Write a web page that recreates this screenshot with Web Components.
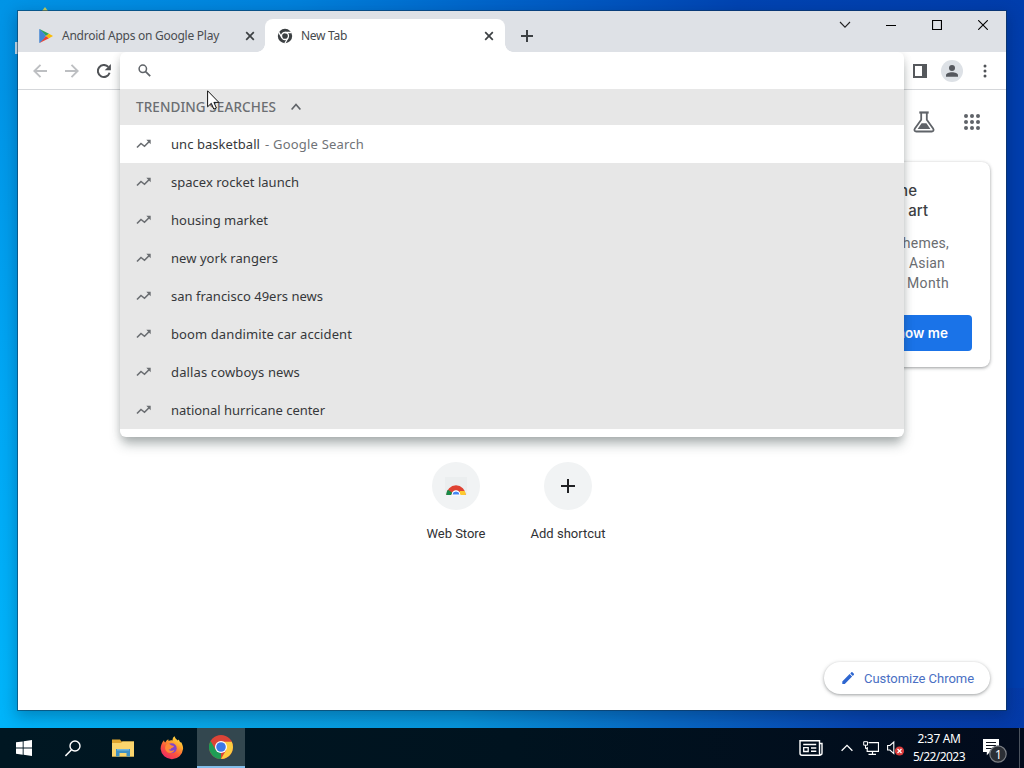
<!DOCTYPE html>
<html lang="en">
<head>
<meta charset="utf-8">
<title>Desktop</title>
<style>
  html, body{
    margin:0;
    width:1024px;
    height:768px;
    overflow:hidden;
    font-family:"Noto Sans", "Open Sans", sans-serif;
  }
</style>
</head>
<body>

<desk-top>
  <browser-window>
    <browser-tab slot="tabs" icon="play" w="157">Android Apps on Google Play</browser-tab>
    <browser-tab slot="tabs" icon="chromeDark" w="46" active>New Tab</browser-tab>

    <new-tab-page>
      <short-cut icon="webstore" w="59">Web Store</short-cut>
      <short-cut icon="plusBig" w="75">Add shortcut</short-cut>
    </new-tab-page>

    <search-popup slot="popup">
      <search-item w="89" selected>unc basketball</search-item>
      <search-item w="128">spacex rocket launch</search-item>
      <search-item w="97">housing market</search-item>
      <search-item w="107">new york rangers</search-item>
      <search-item w="152">san francisco 49ers news</search-item>
      <search-item w="181">boom dandimite car accident</search-item>
      <search-item w="129">dallas cowboys news</search-item>
      <search-item w="154">national hurricane center</search-item>
    </search-popup>
  </browser-window>
  <task-bar slot="bar"></task-bar>
  <mouse-pointer slot="pointer"></mouse-pointer>
</desk-top>

<script>
// name: [width, height, markup]
const ICONS = {
  play: [16, 16, `<path d="M1.5 1v14L8 8z" fill="#4285d4"/><path d="M1.5 1 11 5.7 8 8z" fill="#2da55d"/><path d="M1.5 15 11 10.3 8 8z" fill="#ea4335"/><path d="M11 5.7 15 8l-4 2.3L8 8z" fill="#fbbc04"/><path d="M1.500 1v14L6.500 10V6z" fill="#4285d4"/>`],
  chromeDark: [16, 16, `<circle cx="8" cy="8" r="7.200" fill="#3c4043"/><circle cx="8" cy="8" r="3.500" fill="none" stroke="#fff" stroke-width="1.300"/><path d="M8 4.500h6.500M5 9.800 1.700 4.200M11 9.800 7.800 15.500" stroke="#fff" stroke-width="1.300"/>`],
  close: [10, 10, `<path d="m1.200 1.200 7.600 7.600m0-7.600L1.200 8.800" stroke="#3c4043" stroke-width="1.700"/>`],
  plus: [12, 12, `<path d="M6 0v12M0 6h12" stroke="#3c4043" stroke-width="2"/>`],
  plusBig: [14, 14, `<path d="M7 0v14M0 7h14" stroke="#202124" stroke-width="2"/>`],
  winMenu: [12, 12, `<path d="m1 3 5 5.200L11 3" fill="none" stroke="#222" stroke-width="1.100"/>`],
  winMin: [10, 10, `<path d="M0 5.500h10" stroke="#000"/>`],
  winMax: [10, 10, `<path d="M.5.5h9v9h-9z" fill="none" stroke="#000" stroke-width="1.200"/>`],
  winClose: [10, 10, `<path d="m.2.2 9.600 9.600m0-9.600L.2 9.800" stroke="#000" stroke-width="1.100"/>`],
  back: [14, 14, `<path d="M14 7H1.500M7.500.800 1.300 7l6.200 6.200" fill="none" stroke="#bdbfc2" stroke-width="1.900"/>`],
  forward: [14, 14, `<path d="M0 7h12.500M6.500.800 12.700 7l-6.200 6.200" fill="none" stroke="#bdbfc2" stroke-width="1.900"/>`],
  reload: [14, 14, `<path d="M12.600 8.800A6 6 0 1 1 11.300 2.900" fill="none" stroke="#505357" stroke-width="2"/><path d="M13.900 0v6.300H7.700z" fill="#505357"/>`],
  search: [13, 13, `<circle cx="4.800" cy="4.800" r="3.700" fill="none" stroke="#5f6368" stroke-width="1.500"/><path d="m7.600 7.600 4.600 4.600" stroke="#5f6368" stroke-width="1.700"/>`],
  panel: [14, 14, `<path d="M0 0h14v14H0z" fill="#55585c"/><path d="M2 2h7v10H2z" fill="#fff"/>`],
  person: [22, 22, `<circle cx="11" cy="11" r="11" fill="#dde1e6"/><circle cx="11" cy="8" r="3" fill="#55585e"/><path d="M5 16.800v-1.500c0-4 12-4 12 0v1.500z" fill="#55585e"/>`],
  dots: [4, 14, `<circle cx="2" cy="2" r="1.500" fill="#505357"/><circle cx="2" cy="7" r="1.500" fill="#505357"/><circle cx="2" cy="12" r="1.500" fill="#505357"/>`],
  caret: [10, 10, `<path d="m.600 7.500 4.400-5 4.400 5" fill="none" stroke="#5f6368" stroke-width="1.700"/>`],
  trend: [16, 10, `<path d="m1 8.500 4-4 3.500 2.800 5-5" fill="none" stroke="#6a6d71" stroke-width="1.600"/><path d="M10.300.800h4.400v4.400z" fill="#6a6d71"/>`],
  flask: [22, 22, `<path d="M6.300 1.500h9.400" stroke="#5f6368" stroke-width="2.200"/><path d="M8.200 2v6.700L1.900 17.500c-1 1.500-.3 3 1.400 3h15.400c1.700 0 2.400-1.500 1.400-3L13.800 8.700V2" fill="none" stroke="#5f6368" stroke-width="1.800"/><path d="m4.600 18 4-5.700h4.800l4 5.700z" fill="#5f6368"/>`],
  apps: [16, 16, [2, 8, 14].map(y => [2, 8, 14].map(x => `<circle cx="${x}" cy="${y}" r="2" fill="#5f6368"/>`).join('')).join('')],
  webstore: [24, 24, `<path d="M1 3h22v18H1z" fill="#ebeeef"/><path d="M2.300 21a9.700 9.700 0 0 1 19.400 0h-5a4.700 4.700 0 0 0-9.400 0z" fill="#df4232"/><path d="M2.300 21c0-2.200.600-3.800 1.600-5.200L8 18.500 7.300 21z" fill="#188a47"/><path d="M16 17h4.800c.7 1.300.9 2.700.9 4H16z" fill="#fdc92f"/><path d="M8 21a4 4 0 0 1 8 0z" fill="#4285f4" stroke="#fff"/>`],
  pencil: [12, 12, `<path d="M.300 9.400 7.600 2.100l2.500 2.500-7.300 7.300H.300zM8.300 1.400 9.400.300c.3-.3.7-.3 1 0l1.500 1.500c.3.300.3.700 0 1l-1.100 1.100z" fill="#2e66d0"/>`],
  start: [16, 16, `<path d="M0 2.300 6.700 1.400v6.200H0zM7.600 1.200 16 0v7.600H7.600zM0 8.500h6.700v6.200L0 13.800zM7.600 8.500H16V16l-8.400-1.200z" fill="#fff"/>`],
  magnifier: [16, 17, `<circle cx="10" cy="6" r="5" fill="none" stroke="#fff" stroke-width="1.400"/><path d="M6.500 9.700.400 16" stroke="#fff" stroke-width="1.500"/>`],
  folder: [22, 18, `<path d="M0 .500h8l1.500 2H22V17.500H0z" fill="#e0a52f"/><path d="M0 4h9l1.500-1.500H22v15H0z" fill="#fbd56d"/><path d="M4 17.500V10h14v7.500h-3.500V14h-7v3.500z" fill="#3f91c4"/><path d="M5 10h12v1.500H5z" fill="#74b6db"/>`],
  firefox: [24, 24, `<defs><linearGradient id="f" x1=".9" y1="0" x2=".25" y2="1"><stop offset="0" stop-color="#fff14d"/><stop offset=".35" stop-color="#ffa62d"/><stop offset=".65" stop-color="#fb553c"/><stop offset="1" stop-color="#ee2765"/></linearGradient></defs><path d="M4 4.200c.2 1.200.7 1.900 1.200 2.200C6 5 7 3.900 8.300 3.200L8.600 5c1.300-.7 2.600-.9 4-.5-.2-1.800.5-3.500 2-4.300.5 2 1.700 3 3.200 4.300l.8-.9c.7 1 1.300 2 1.500 2.900l.9-.4c1.300 2 2.100 4.100 2.100 6.700A11.300 11.300 0 0 1 .600 13c0-3.700 1.300-6.400 3.400-8.800z" fill="url(#f)"/><circle cx="11.700" cy="12.300" r="5" fill="#8144c9"/><path d="M6.500 8.500c1.600-1 3.500-.4 4.700.7l2.800.8c-.3 1.300-1.400 1.700-2.800 2.200-.3 1.300-1.500 1.600-2.600 1.300 1.200 2 4.300 1.500 5.900.2-1.300 4-6.500 4.500-8.700.8-1.100-1.900-.9-4.400.7-6z" fill="#ff8a36"/>`],
  chrome: [24, 24, `<circle cx="12" cy="12" r="12" fill="#db4437"/><path d="M1.600 6 6.800 15 12 18v6A12 12 0 0 1 1.600 6z" fill="#1f9d55"/><path d="M12 24a12 12 0 0 0 10.800-17.200H12l5.200 8.200z" fill="#fdcd40"/><circle cx="12" cy="12" r="6" fill="#fff"/><circle cx="12" cy="12" r="4.800" fill="#3b78e7"/>`],
  news: [24, 16, `<path d="M20.500 3.500H23v9.800c0 2-2.500 2-2.500 0V.8H1v12.500C1 14.600 1.800 15.200 3 15.200h18.500" fill="none" stroke="#fff" stroke-width="1.400"/><path d="M4.200 4.500h13M12 8h5.300M12 11.300h5.300" stroke="#fff" stroke-width="1.500"/><path d="M4.700 7.700h4.500v3.800H4.700z" fill="none" stroke="#fff" stroke-width="1.300"/>`],
  trayUp: [12, 8, `<path d="m.600 6.800 5.400-5.400 5.400 5.400" fill="none" stroke="#fff" stroke-width="1.300"/>`],
  network: [16, 14, `<path d="M5.500 1.700h10v8.600H4.200V6M9.500 10.300v3M5.500 13.300h7.500" fill="none" stroke="#fff" stroke-width="1.200"/><path d="M.700.700h3.800v3.500H.700zM2.500 4v3.500h2" fill="none" stroke="#fff"/>`],
  sound: [18, 16, `<path d="M.600 5.500h2.300L6.800 2v11.500L2.900 10H.600z" fill="none" stroke="#fff" stroke-width="1.100"/><circle cx="12.500" cy="11" r="4.600" fill="#d93a3a"/><path d="m10.500 9 4 4m0-4-4 4" stroke="#fff" stroke-width="1.200"/>`],
  notes: [28, 27, `<path d="M1 3h16v13h-9l-3.200 3.200V16H1z" fill="#fff"/><path d="M4 6.500h10M4 9.500h10M4 12.500h7" stroke="#10151f"/><circle cx="16" cy="18" r="8.200" fill="#2b2f35" stroke="#7b7f85" stroke-width="1.200"/>`]
};

class BaseElement extends HTMLElement{

  constructor(){
    super();
    this.attachShadow({mode:"open"});
  }

  getTemplate(){
    const template = document.createElement('template');
    template.innerHTML = `${this.getStyles()}${this.getMarkup()}`;
    return template
  }

  getStyles(){
    return ''
  }

  getMarkup(){
    return '<slot></slot>'
  }

  connectedCallback(){
    this.shadowRoot.replaceChildren(this.getTemplate().content.cloneNode(true));
  }

}

class UiIcon extends BaseElement{

  getStyles(){
    return `<style>:host{ display:block; flex:none; } svg{ display:block; }</style>`
  }

  getMarkup(){
    const [w, h, body] = ICONS[this.getAttribute('name')];
    return `<svg width="${w}" height="${h}" viewBox="0 0 ${w} ${h}">${body}</svg>`
  }

}

// a single line of text, tracked so that it is exactly "w" pixels wide
class FitText extends BaseElement{

  getStyles(){
    return `
      <style>
        :host{ display:block; flex:none; white-space:nowrap; }
        span{ display:inline-block; }
      </style>
    `
  }

  getMarkup(){
    return '<span><slot></slot></span>'
  }

  connectedCallback(){
    super.connectedCallback();
    const w = Number(this.getAttribute('w'));
    const span = this.shadowRoot.querySelector('span');
    const natural = span.getBoundingClientRect().width;
    if(w && natural){
      span.style.letterSpacing = `${(w - natural) / this.textContent.length}px`;
      this.style.width = `${w}px`;
    }
  }

}

class DeskTop extends BaseElement{

  getStyles(){
    return `
      <style>
        :host{
          display:flex;
          flex-direction:column;
          box-sizing:border-box;
          position:relative;
          width:1024px;
          height:768px;
          padding-top:11px;
          overflow:hidden;
          background:
            linear-gradient(90deg, #0094e6 0, #0082dc 28%, #0061c8 50%, #0044b2 72%, #003dac 100%) 0 0 / 100% 90px no-repeat,
            linear-gradient(90deg, #00b4fa 0, #08a6e6 20%, #0794da 45%, #0869c4 65%, #0743b0 85%, #043aa8 100%) 0 100% / 100% 80px no-repeat,
            linear-gradient(90deg, transparent 50%, #003eae 50%),
            linear-gradient(#0094e6 80px, #00a8f5 400px, #00b4fa 690px);
        }
        .mark{ position:absolute; left:15px; top:42px; width:3px; height:12px; background:#cde4f2; }
        .mark.top{ left:42px; top:7px; width:6px; height:4px; background:#c4cf5c; clip-path:polygon(50% 0, 100% 100%, 0 100%); }
      </style>
    `
  }

  getMarkup(){
    return `
      <i class="mark"></i><i class="mark top"></i>
      <slot></slot>
      <slot name="bar"></slot>
      <slot name="pointer"></slot>
    `
  }

}

class BrowserWindow extends BaseElement{

  getStyles(){
    return `
      <style>
        :host{
          display:flex;
          flex-direction:column;
          position:relative;
          width:988px;
          height:699px;
          margin-left:18px;
          background:#fff;
          box-shadow:0 0 0 1px rgba(15,50,80,.55), 0 5px 14px 2px rgba(0,20,50,.28);
        }
        .strip{ display:flex; height:41px; background:#dee1e6; }
        .tabs{ display:flex; align-items:flex-end; padding-left:7px; }
        .new{ margin:19px 0 0 16px; }
        .controls{ display:flex; margin-left:auto; }
        .controls span{ width:46px; height:28px; display:grid; place-items:center; }
        .bar{ display:flex; align-items:center; height:37px; border-bottom:1px solid #d5d7da; }
        .nav{ display:flex; gap:18px; padding-left:15px; }
        .actions{ display:flex; align-items:center; margin-left:auto; padding-right:19px; }
        .actions ui-icon + ui-icon{ margin-left:14px; }
        .actions ui-icon:last-child{ margin-left:20px; }
      </style>
    `
  }

  getMarkup(){
    return `
      <div class="strip">
        <div class="tabs"><slot name="tabs"></slot></div>
        <ui-icon class="new" name="plus"></ui-icon>
        <div class="controls">
          <span><ui-icon name="winMenu"></ui-icon></span>
          <span><ui-icon name="winMin"></ui-icon></span>
          <span><ui-icon name="winMax"></ui-icon></span>
          <span><ui-icon name="winClose"></ui-icon></span>
        </div>
      </div>
      <div class="bar">
        <div class="nav">
          <ui-icon name="back"></ui-icon>
          <ui-icon name="forward"></ui-icon>
          <ui-icon name="reload"></ui-icon>
        </div>
        <div class="actions">
          <ui-icon name="panel"></ui-icon>
          <ui-icon name="person"></ui-icon>
          <ui-icon name="dots"></ui-icon>
        </div>
      </div>
      <slot></slot>
      <slot name="popup"></slot>
    `
  }

}

class BrowserTab extends BaseElement{

  getStyles(){
    return `
      <style>
        :host{
          display:flex;
          align-items:center;
          box-sizing:border-box;
          width:240px;
          height:33px;
          padding:0 10px 0 13px;
          border-radius:8px 8px 0 0;
          font-size:12px;
          line-height:18px;
          color:#4a4d51;
        }
        :host([active]){
          position:relative;
          padding:0 11px 0 12px;
          background:#fff;
          color:#45494d;
        }
        /* rounded feet of the active tab */
        :host([active])::before, :host([active])::after{
          content:"";
          position:absolute;
          bottom:0;
          width:8px;
          height:8px;
        }
        :host([active])::before{ left:-8px; background:radial-gradient(circle at 0 0, transparent 7.5px, #fff 8px); }
        :host([active])::after{ right:-8px; background:radial-gradient(circle at 100% 0, transparent 7.5px, #fff 8px); }
        fit-text{ margin-left:8px; }
        .x{ margin-left:auto; }
      </style>
    `
  }

  getMarkup(){
    return `
      <ui-icon name="${this.getAttribute('icon')}"></ui-icon>
      <fit-text w="${this.getAttribute('w')}">${this.textContent}</fit-text>
      <ui-icon class="x" name="close"></ui-icon>
    `
  }

}

class SearchPopup extends BaseElement{

  getStyles(){
    return `
      <style>
        :host{
          display:block;
          position:absolute;
          left:102px;
          top:41px;
          width:784px;
          height:385px;
          background:#fff;
          border-radius:6px;
          box-shadow:0 9px 12px -2px rgba(40,60,60,.34), 0 2px 8px rgba(0,0,0,.13);
          clip-path:inset(0 -20px -30px -20px);
        }
        .input{ display:flex; align-items:center; height:37px; padding-left:18px; }
        .head{
          display:flex;
          align-items:center;
          box-sizing:border-box;
          height:36px;
          padding-left:16px;
          gap:15px;
          background:#e7e7e7;
          color:#6b6e72;
          font-size:13.5px;
          font-weight:500;
          line-height:20px;
        }
      </style>
    `
  }

  getMarkup(){
    return `
      <div class="input"><ui-icon name="search"></ui-icon></div>
      <div class="head">
        <fit-text w="140">TRENDING SEARCHES</fit-text>
        <ui-icon name="caret"></ui-icon>
      </div>
      <slot></slot>
    `
  }

}

class SearchItem extends BaseElement{

  getStyles(){
    return `
      <style>
        :host{
          display:flex;
          align-items:center;
          height:38px;
          padding-left:16px;
          background:#e7e7e7;
          color:#36383b;
          font-size:13px;
          line-height:21px;
        }
        :host([selected]){ background:#fff; }
        fit-text{ margin-left:19px; }
        .from{ margin-left:5px; color:#707377; }
      </style>
    `
  }

  getMarkup(){
    const from = this.hasAttribute('selected') ? '<fit-text class="from" w="99">- Google Search</fit-text>' : '';
    return `
      <ui-icon name="trend"></ui-icon>
      <fit-text w="${this.getAttribute('w')}">${this.textContent}</fit-text>
      ${from}
    `
  }

}

class NewTabPage extends BaseElement{

  getStyles(){
    return `
      <style>
        :host{
          display:flex;
          flex-direction:column;
          flex:1;
          min-height:0;
          font-family:Roboto, sans-serif;
        }
        .top{
          display:flex;
          justify-content:flex-end;
          align-items:center;
          gap:29px;
          height:32px;
          padding:16px 26px 0 0;
        }
        .card{
          display:flex;
          flex-direction:column;
          align-items:flex-end;
          align-self:flex-end;
          box-sizing:border-box;
          width:150px;
          height:205px;
          margin:24px 16px 0 0;
          padding-top:19px;
          border-radius:8px;
          box-shadow:0 1px 3px rgba(60,64,67,.4), 0 1px 4px rgba(60,64,67,.16);
          font-size:14px;
          line-height:20px;
          color:#6a6d71;
        }
        .title{ font:500 15px/20px Inter, sans-serif; color:#3c4043; }
        .gap{ margin-top:12px; }
        .show{
          display:flex;
          align-items:center;
          justify-content:flex-end;
          box-sizing:border-box;
          width:90px;
          height:36px;
          margin:22px 18px 0 0;
          padding-right:24px;
          border-radius:4px;
          background:#1a73e8;
          color:#fff;
          font:600 13.5px/20px Inter, sans-serif;
        }
        .shortcuts{ display:flex; justify-content:center; margin-top:95px; }
        .customize{
          display:flex;
          align-items:center;
          align-self:flex-end;
          box-sizing:border-box;
          width:166px;
          height:32px;
          margin:auto 16px 16px 0;
          padding-left:18px;
          gap:10px;
          border-radius:16px;
          box-shadow:0 1px 3px rgba(60,64,67,.4), 0 1px 5px rgba(60,64,67,.14);
          font-size:13px;
          line-height:18px;
          color:#4a70c4;
        }
        .customize fit-text{ padding-top:1px; }
      </style>
    `
  }

  getMarkup(){
    return `
      <div class="top">
        <ui-icon name="flask"></ui-icon>
        <ui-icon name="apps"></ui-icon>
      </div>
      <div class="card">
        <fit-text class="title" style="margin-right:73px">me</fit-text>
        <fit-text class="title" style="margin-right:62px">art</fit-text>
        <fit-text class="gap" w="51" style="margin-right:41px">themes,</fit-text>
        <fit-text w="36" style="margin-right:45px">Asian</fit-text>
        <fit-text w="42" style="margin-right:41px">Month</fit-text>
        <div class="show">Show me</div>
      </div>
      <div class="shortcuts"><slot></slot></div>
      <div class="customize">
        <ui-icon name="pencil"></ui-icon>
        <fit-text w="110">Customize Chrome</fit-text>
      </div>
    `
  }

}

class ShortCut extends BaseElement{

  getStyles(){
    return `
      <style>
        :host{
          display:flex;
          flex-direction:column;
          align-items:center;
          width:112px;
          font-size:13px;
          line-height:20px;
          color:#303134;
        }
        .circle{
          display:grid;
          place-items:center;
          width:48px;
          height:48px;
          margin-bottom:14px;
          border-radius:50%;
          background:#f1f3f4;
        }
      </style>
    `
  }

  getMarkup(){
    return `
      <div class="circle"><ui-icon name="${this.getAttribute('icon')}"></ui-icon></div>
      <fit-text w="${this.getAttribute('w')}">${this.textContent}</fit-text>
    `
  }

}

class TaskBar extends BaseElement{

  getStyles(){
    return `
      <style>
        :host{
          display:flex;
          position:relative;
          height:40px;
          margin-top:18px;
          background:linear-gradient(90deg, #001722, #00131f 50%, #020b1c);
          color:#fff;
        }
        .app{ display:grid; place-items:center; width:48px; height:40px; }
        .app + .app{ margin-left:1px; }
        .app:nth-child(2){ margin-left:0; }
        .app.open{ box-sizing:border-box; background:#33474f; border-bottom:2px solid #82bdea; }
        .tray{ display:flex; align-items:center; margin-left:auto; }
        .clock{
          display:flex;
          flex-direction:column;
          align-items:center;
          width:52px;
          margin-left:8px;
          font-size:12px;
          line-height:18px;
        }
        .notes{ display:grid; margin-left:17px; padding-top:4px; }
        .notes > *{ grid-area:1 / 1; }
        .notes b{ padding:9px 0 0 13px; font:12px/19px "Noto Sans", sans-serif; }
        .peek{ align-self:stretch; width:4px; margin-left:9px; border-left:1px solid #4b535e; }
      </style>
    `
  }

  getMarkup(){
    return `
      <div class="app"><ui-icon name="start"></ui-icon></div>
      <div class="app"><ui-icon name="magnifier"></ui-icon></div>
      <div class="app" style="margin-left:2px"><ui-icon name="folder"></ui-icon></div>
      <div class="app"><ui-icon name="firefox"></ui-icon></div>
      <div class="app open"><ui-icon name="chrome"></ui-icon></div>
      <div class="tray">
        <ui-icon name="news"></ui-icon>
        <ui-icon name="trayUp" style="margin-left:18px"></ui-icon>
        <ui-icon name="network" style="margin-left:10px"></ui-icon>
        <ui-icon name="sound" style="margin-left:8px"></ui-icon>
        <div class="clock">
          <fit-text w="43">2:37 AM</fit-text>
          <fit-text w="52">5/22/2023</fit-text>
        </div>
        <div class="notes"><ui-icon name="notes"></ui-icon><b>1</b></div>
        <div class="peek"></div>
      </div>
    `
  }

}

class MousePointer extends BaseElement{

  getStyles(){
    return `<style>:host{ position:absolute; left:207px; top:90px; } svg{ display:block; }</style>`
  }

  getMarkup(){
    return `
      <svg width="13" height="20" viewBox="0 0 13 20">
        <path d="M.6.800v16l3.700-3.500 2.500 5.800 2.600-1.100-2.500-5.600h5z" fill="#fff" stroke="#111" stroke-width="1"/>
      </svg>
    `
  }

}

customElements.define('ui-icon', UiIcon);
customElements.define('fit-text', FitText);
customElements.define('desk-top', DeskTop);
customElements.define('browser-window', BrowserWindow);
customElements.define('browser-tab', BrowserTab);
customElements.define('search-popup', SearchPopup);
customElements.define('search-item', SearchItem);
customElements.define('new-tab-page', NewTabPage);
customElements.define('short-cut', ShortCut);
customElements.define('task-bar', TaskBar);
customElements.define('mouse-pointer', MousePointer);
</script>
</body>
</html>
